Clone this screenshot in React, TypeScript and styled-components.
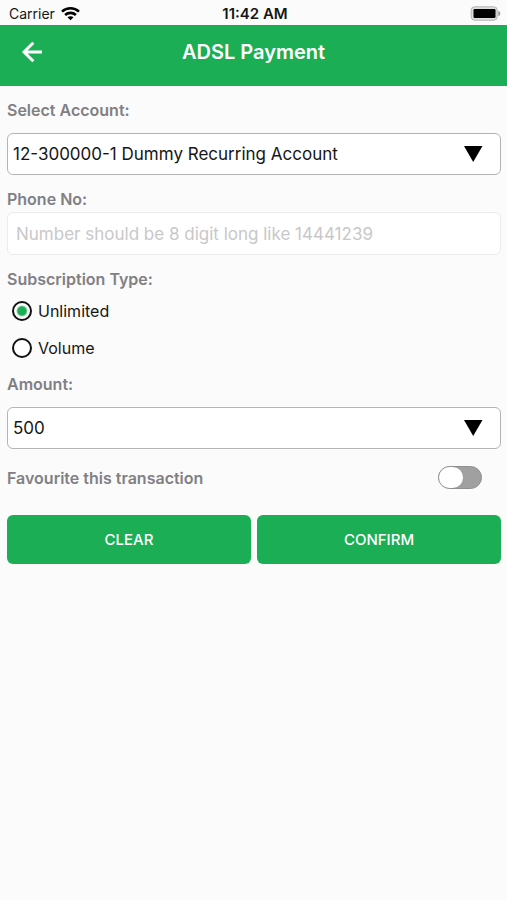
import React, { useState } from "react";
import styled, { createGlobalStyle } from "styled-components";

const GREEN = "#1bae54";

const GlobalStyle = createGlobalStyle`
  *, *::before, *::after { box-sizing: border-box; }
  body {
    margin: 0;
    background: #fbfbfb;
    font-family: Inter, "Liberation Sans", sans-serif;
    color: #161616;
  }
  button, input, select { font-family: inherit; }
`;

const Screen = styled.div`
  min-height: 100vh;
`;

const StatusBar = styled.div`
  display: grid;
  grid-template-columns: 1fr auto 1fr;
  align-items: center;
  height: 25px;
  padding: 2px 6px 0 9px;
  font-size: 14px;
  line-height: 20px;
`;

const Carrier = styled.div`
  display: flex;
  align-items: center;
  gap: 6px;
`;

const Clock = styled.time`
  font-size: 15px;
  font-weight: 600;
`;

const BatterySlot = styled.div`
  display: flex;
  justify-content: flex-end;
`;

const Header = styled.header`
  display: grid;
  grid-template-columns: 48px 1fr 48px;
  align-items: center;
  height: 61px;
  padding: 0 8px 7px;
  background: ${GREEN};
  color: #fff;
`;

const BackButton = styled.button`
  display: flex;
  align-items: center;
  justify-content: center;
  height: 48px;
  padding: 0;
  border: 0;
  background: none;
  color: inherit;
`;

const Title = styled.h1`
  margin: 0;
  font-size: 20px;
  line-height: 28px;
  font-weight: 600;
  text-align: center;
`;

const Form = styled.form`
  display: flex;
  flex-direction: column;
  gap: 14px;
  padding: 14px 6px 0 7px;
`;

const Field = styled.div<{ $gap: number }>`
  display: flex;
  flex-direction: column;
  gap: ${(p) => p.$gap}px;
`;

const Label = styled.label`
  color: #808084;
  font-size: 16px;
  line-height: 20px;
  font-weight: 600;
`;

const SelectBox = styled.div`
  display: grid;
  align-items: center;
  & > * { grid-area: 1 / 1; }
  & > svg { justify-self: end; margin-right: 18px; pointer-events: none; }
`;

const Select = styled.select`
  appearance: none;
  width: 100%;
  height: 42px;
  padding: 0 48px 0 5px;
  border: 1px solid #b4b4b4;
  border-radius: 6px;
  background: #fff;
  color: #161616;
  font-size: 17px;
`;

const TextInput = styled.input`
  width: 100%;
  height: 43px;
  padding: 0 8px;
  border: 1px solid #ebebeb;
  border-radius: 6px;
  background: #fff;
  color: #161616;
  font-size: 17px;
  &::placeholder { color: #c8c8ca; opacity: 1; }
`;

const RadioGroup = styled.fieldset`
  margin: 0;
  padding: 0;
  border: 0;
  min-width: 0;
`;

const Legend = styled.legend`
  padding: 0;
  margin-bottom: 3px;
  color: #808084;
  font-size: 16px;
  line-height: 20px;
  font-weight: 600;
`;

const RadioRow = styled.label`
  display: flex;
  align-items: center;
  gap: 6px;
  height: 37px;
  padding-left: 5px;
  font-size: 16px;
`;

const Radio = styled.input`
  appearance: none;
  width: 20px;
  height: 20px;
  margin: 0;
  border: 2px solid #111;
  border-radius: 50%;
  background: #fff;
  &:checked { background: radial-gradient(circle, ${GREEN} 4px, #fff 6px); }
`;

const AmountField = styled(Field)`
  margin-top: -6px;
`;

const SwitchRow = styled.div`
  display: flex;
  align-items: center;
  justify-content: space-between;
  padding: 3px 19px 0 0;
`;

const Switch = styled.input`
  appearance: none;
  display: flex;
  width: 44px;
  height: 23px;
  margin: 0;
  border: 1px solid #8f8f8f;
  border-radius: 12px;
  background: #a0a0a0;
  &::before {
    content: "";
    width: 24px;
    height: 21px;
    border-radius: 12px;
    background: #fff;
  }
  &:checked { background: ${GREEN}; justify-content: flex-end; }
`;

const Actions = styled.div`
  display: grid;
  grid-template-columns: 1fr 1fr;
  gap: 6px;
  padding-top: 12px;
`;

const ActionButton = styled.button`
  height: 49px;
  border: 0;
  border-radius: 6px;
  background: ${GREEN};
  color: #fff;
  font-size: 15px;
  font-weight: 500;
`;

function WifiIcon() {
  return (
    <svg width="19" height="14" viewBox="0 0 19 14" fill="none" stroke="#000" strokeWidth="2.6" aria-hidden="true">
      <path d="M1 4.6C5.8.2 13.2.2 18 4.6" />
      <path d="M4.1 8c3.1-2.8 7.7-2.8 10.8 0" />
      <path d="M9.5 13.2 6.5 10.3c1.7-1.5 4.3-1.5 6 0z" fill="#000" stroke="none" />
    </svg>
  );
}

function BatteryIcon() {
  return (
    <svg width="31" height="15" viewBox="0 0 31 15" aria-hidden="true">
      <rect x="1.2" y="0.8" width="26" height="13.4" rx="3.4" fill="#dedede" stroke="#b4b4b4" />
      <rect x="3.5" y="3" width="22" height="9" rx="1.2" fill="#000" />
      <path d="M28.3 4.7c2.7 1.2 2.7 4.4 0 5.6z" fill="#999" />
    </svg>
  );
}

function BackIcon() {
  return (
    <svg width="22" height="22" viewBox="0 0 22 22" fill="none" stroke="currentColor" strokeWidth="2.9" aria-hidden="true">
      <path d="M12.3 1.8 3 11l9.3 9.2M3.4 11H21" />
    </svg>
  );
}

function CaretIcon() {
  return (
    <svg width="19" height="16" viewBox="0 0 19 16" aria-hidden="true">
      <path d="M0 0h18.5L9.2 16z" fill="#000" />
    </svg>
  );
}

export default function App() {
  const [plan, setPlan] = useState("Unlimited");
  return (
    <Screen>
      <GlobalStyle />
      <StatusBar>
        <Carrier>Carrier <WifiIcon /></Carrier>
        <Clock>11:42 AM</Clock>
        <BatterySlot><BatteryIcon /></BatterySlot>
      </StatusBar>
      <Header>
        <BackButton type="button" aria-label="Back"><BackIcon /></BackButton>
        <Title>ADSL Payment</Title>
      </Header>
      <Form onSubmit={(e) => e.preventDefault()}>
        <Field $gap={13}>
          <Label htmlFor="account">Select Account:</Label>
          <SelectBox>
            <Select id="account"><option>12-300000-1 Dummy Recurring Account</option></Select>
            <CaretIcon />
          </SelectBox>
        </Field>
        <Field $gap={3}>
          <Label htmlFor="phone">Phone No:</Label>
          <TextInput id="phone" type="tel" placeholder="Number should be 8 digit long like 14441239" />
        </Field>
        <RadioGroup>
          <Legend>Subscription Type:</Legend>
          {["Unlimited", "Volume"].map((name) => (
            <RadioRow key={name}>
              <Radio type="radio" name="plan" checked={plan === name} onChange={() => setPlan(name)} />
              {name}
            </RadioRow>
          ))}
        </RadioGroup>
        <AmountField $gap={13}>
          <Label htmlFor="amount">Amount:</Label>
          <SelectBox>
            <Select id="amount"><option>500</option></Select>
            <CaretIcon />
          </SelectBox>
        </AmountField>
        <SwitchRow>
          <Label htmlFor="favourite">Favourite this transaction</Label>
          <Switch id="favourite" type="checkbox" role="switch" />
        </SwitchRow>
        <Actions>
          <ActionButton type="reset">CLEAR</ActionButton>
          <ActionButton type="submit">CONFIRM</ActionButton>
        </Actions>
      </Form>
    </Screen>
  );
}
